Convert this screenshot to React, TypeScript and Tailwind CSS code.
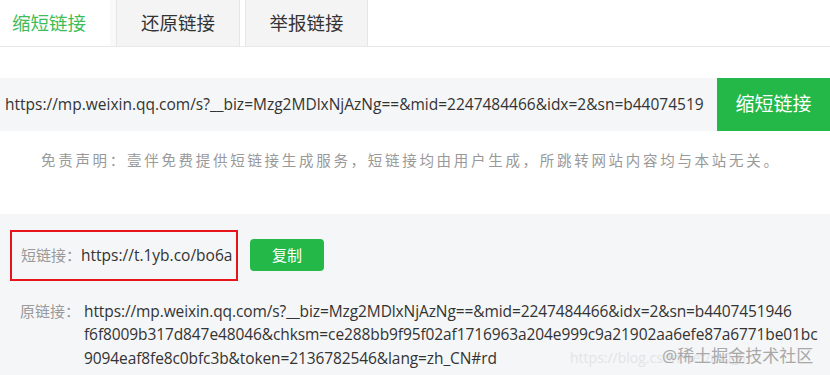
import React from "react";

const FONT = "font-['Segoe_UI','Open_Sans','Noto_Sans_CJK_SC',sans-serif]";

export default function App() {
  return (
    <div className={`w-[830px] h-[375px] overflow-hidden bg-white ${FONT}`}>
      {/* Tabs */}
      <div className="flex h-[47px] border-b border-[#e8e8e8]">
        <div className="w-[110px] flex items-center pl-[12px] text-[18.5px] text-[#3cbd5a] bg-white">缩短链接</div>
        <div className="w-[6px] bg-[#f9f9f9]" />
        <div className="w-[124px] flex items-center justify-center text-[18.5px] text-[#333] bg-[#f4f4f4] border-x border-[#e6e6e6]">还原链接</div>
        <div className="w-[5px]" />
        <div className="w-[123px] flex items-center justify-center text-[18.5px] text-[#333] bg-[#f4f4f4] border-x border-[#e6e6e6]">举报链接</div>
      </div>

      {/* Input row */}
      <div className="flex mt-[31px] h-[53px]">
        <div className="flex-1 bg-[#f5f6f7] flex items-center pl-[5px] text-[15.5px] text-[#333] overflow-hidden whitespace-nowrap">
          https://mp.weixin.qq.com/s?__biz=Mzg2MDlxNjAzNg==&amp;mid=2247484466&amp;idx=2&amp;sn=b44074519
        </div>
        <div className="w-[113px] bg-[#23b848] flex items-center justify-center text-[19px] text-white">缩短链接</div>
      </div>

      {/* Disclaimer */}
      <div className="mt-[19px] pl-[41px] text-[14.5px] tracking-[2.7px] text-[#999] whitespace-nowrap">
        免责声明：壹伴免费提供短链接生成服务，短链接均由用户生成，所跳转网站内容均与本站无关。
      </div>

      {/* Result panel */}
      <div className="relative mt-[42px] bg-[#f5f6f7] h-[163px] pt-[16px]">
        <div className="flex items-center">
          <div className="ml-[10px] w-[228px] h-[51px] border-2 border-[#e8141b] flex items-center pl-[9px] whitespace-nowrap">
            <span className="text-[15px] text-[#999]">短链接：</span>
            <span className="text-[15.5px] text-[#333]">https://t.1yb.co/bo6a</span>
          </div>
          <div className="ml-[12px] w-[74px] h-[32px] rounded-[4px] bg-[#23b848] text-white text-[15px] flex items-center justify-center">复制</div>
        </div>
        <div className="flex mt-[19px] pl-[20px]">
          <span className="text-[15px] text-[#999] leading-[23.5px] shrink-0 w-[64px]">原链接：</span>
          <div className="text-[15.5px] text-[#333] leading-[23.5px] whitespace-nowrap tracking-[-0.1px]">
            https://mp.weixin.qq.com/s?__biz=Mzg2MDlxNjAzNg==&amp;mid=2247484466&amp;idx=2&amp;sn=b4407451946
            <br />
            f6f8009b317d847e48046&amp;chksm=ce288bb9f95f02af1716963a204e999c9a21902aa6efe87a6771be01bc
            <br />
            9094eaf8fe8c0bfc3b&amp;token=2136782546&amp;lang=zh_CN#rd
          </div>
        </div>
        <div className="absolute left-[570px] bottom-[9px] whitespace-nowrap text-[14px] text-[#e2e4e6]">
          https://blog.csdn.net/m0_6
        </div>
        <div className="absolute left-[662px] bottom-[8px] text-[17px] text-[#a8a8a8] whitespace-nowrap">@稀土掘金技术社区</div>
      </div>
    </div>
  );
}
